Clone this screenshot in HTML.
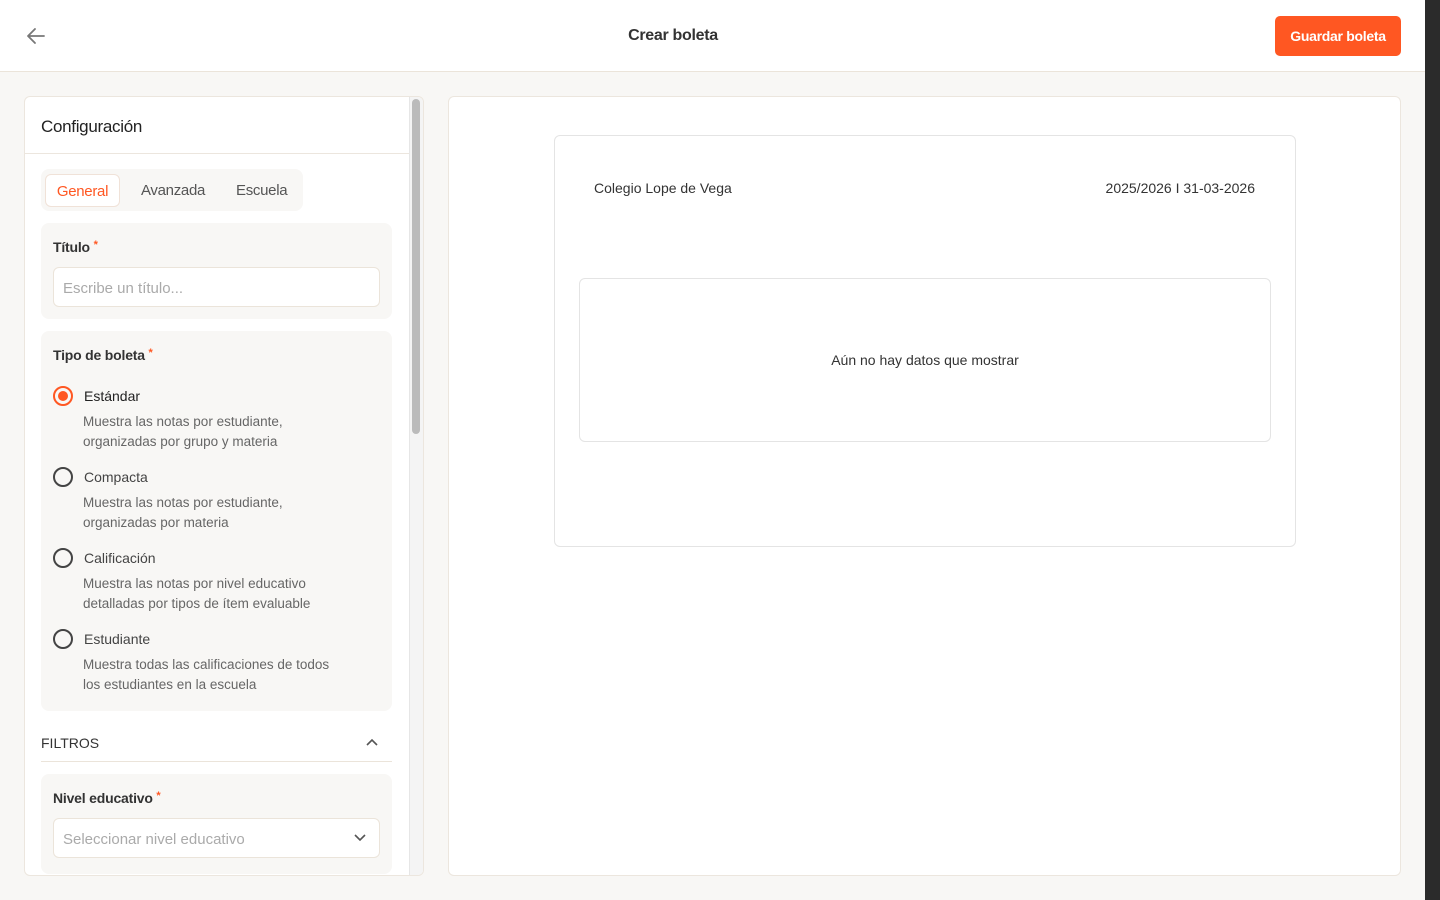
<!DOCTYPE html><html><head><meta charset="utf-8"><style>
*{box-sizing:border-box;margin:0;padding:0}
body{width:1440px;height:900px;overflow:hidden;background:#f8f7f5;font-family:"Liberation Sans",sans-serif;position:relative;color:#333}
.dark{position:absolute;left:1425px;top:0;width:15px;height:900px;background:#2b2b2b}
.top{position:absolute;left:0;top:0;width:1425px;height:72px;background:#fff;border-bottom:1px solid #ebe4da}
.title{position:absolute;left:0;width:1346px;top:27px;text-align:center;font-size:16px;color:#333;font-weight:bold;letter-spacing:-0.3px}
.btn{position:absolute;left:1275px;top:16px;width:126px;height:40px;background:#ff5722;border-radius:5px;color:#fff;font-weight:bold;font-size:14px;text-align:center;line-height:41px;letter-spacing:-0.3px}
.left{position:absolute;left:24px;top:96px;width:400px;height:780px;background:#fff;border:1px solid #ece6de;border-radius:6px;overflow:hidden}
.hd{height:57px;border-bottom:1px solid #ece6de;padding:20px 16px;font-size:17px;color:#222;width:384px;letter-spacing:-0.3px}
.sb{position:absolute;left:387px;top:2px;width:8px;height:335px;background:#bbb;border-radius:4px}
.sbt{position:absolute;left:384px;top:0;width:16px;height:780px;background:#f4f4f4;border-left:1px solid #e6e6e6}
.tabs{position:absolute;left:16px;top:72px;width:262px;height:42px;background:#f8f7f5;border-radius:8px;font-size:15px;color:#555;letter-spacing:-0.3px}
.tab{position:absolute;top:5px;height:33px;line-height:33px}
.card{position:absolute;left:16px;width:351px;background:#f8f7f5;border-radius:8px}
.lbl{font-size:14px;font-weight:bold;color:#333;position:absolute;left:12px;letter-spacing:-0.2px}
.req{color:#ff5722;font-size:11px;vertical-align:top}
.inp{position:absolute;left:12px;width:327px;height:40px;background:#fff;border:1px solid #ebe4da;border-radius:6px;color:#aaa;font-size:15px;padding:0 9px;line-height:41px}
.r{position:absolute;left:12px;font-size:14px;color:#444}
.rc{position:absolute;left:0;top:-1px;width:20px;height:20px;border:2px solid #444;border-radius:50%}
.r .t{position:absolute;left:31px;top:1px;white-space:nowrap}
.r .d{position:absolute;left:30px;top:25px;white-space:nowrap;line-height:20px;color:#666;font-size:13.5px}
.right{position:absolute;left:448px;top:96px;width:953px;height:780px;background:#fff;border:1px solid #ece6de;border-radius:6px}
.doc{position:absolute;left:105px;top:38px;width:742px;height:412px;border:1px solid #e4e4e4;border-radius:6px}
.empty{position:absolute;left:24px;top:142px;width:692px;height:164px;border:1px solid #e4e4e4;border-radius:6px;text-align:center;line-height:162px;font-size:14px;color:#333}
</style></head><body>
<div class="top">
<svg style="position:absolute;left:26px;top:27px" width="20" height="18" viewBox="0 0 20 18"><path d="M18 9H2M9 2L2 9l7 7" fill="none" stroke="#777" stroke-width="1.8" stroke-linecap="round" stroke-linejoin="round"/></svg>
<div class="title">Crear boleta</div>
<div class="btn">Guardar boleta</div>
</div>
<div class="dark"></div>
<div class="left">
<div class="hd">Configuración</div>
<div class="sbt"></div><div class="sb"></div>
<div class="tabs">
<div class="tab" style="left:4px;width:75px;background:#fff;border:1px solid #f0e2d8;border-radius:6px;color:#ff5722;text-align:center">General</div>
<div class="tab" style="left:100px">Avanzada</div>
<div class="tab" style="left:195px">Escuela</div>
</div>
<div class="card" style="top:126px;height:96px">
<div class="lbl" style="top:16px">Título <span class="req">*</span></div>
<div class="inp" style="top:44px">Escribe un título...</div>
</div>
<div class="card" style="top:234px;height:380px">
<div class="lbl" style="top:16px">Tipo de boleta <span class="req">*</span></div>
<div class="r" style="top:56px"><div class="rc" style="border-color:#ff5722"><div style="position:absolute;left:3px;top:3px;width:10px;height:10px;border-radius:50%;background:#ff5722"></div></div><div class="t" style="color:#222">Estándar</div><div class="d">Muestra las notas por estudiante,<br>organizadas por grupo y materia</div></div>
<div class="r" style="top:137px"><div class="rc"></div><div class="t">Compacta</div><div class="d">Muestra las notas por estudiante,<br>organizadas por materia</div></div>
<div class="r" style="top:218px"><div class="rc"></div><div class="t">Calificación</div><div class="d">Muestra las notas por nivel educativo<br>detalladas por tipos de ítem evaluable</div></div>
<div class="r" style="top:299px"><div class="rc"></div><div class="t">Estudiante</div><div class="d">Muestra todas las calificaciones de todos<br>los estudiantes en la escuela</div></div>
</div>
<div style="position:absolute;left:16px;top:638px;font-size:14px;color:#333">FILTROS</div>
<svg style="position:absolute;left:340px;top:640px" width="14" height="10" viewBox="0 0 14 10"><path d="M2 8l5-5 5 5" fill="none" stroke="#555" stroke-width="1.6"/></svg>
<div style="position:absolute;left:16px;top:664px;width:351px;height:1px;background:#ebe4da"></div>
<div class="card" style="top:677px;height:100px">
<div class="lbl" style="top:16px">Nivel educativo <span class="req">*</span></div>
<div class="inp" style="top:44px">Seleccionar nivel educativo
<svg style="position:absolute;right:12px;top:14px" width="14" height="10" viewBox="0 0 14 10"><path d="M2 2l5 5 5-5" fill="none" stroke="#555" stroke-width="1.6"/></svg></div>
</div>
</div>
<div class="right"><div class="doc">
<div style="position:absolute;left:39px;top:44px;font-size:14px">Colegio Lope de Vega</div>
<div style="position:absolute;right:40px;top:44px;font-size:14px">2025/2026 I 31-03-2026</div>
<div class="empty">Aún no hay datos que mostrar</div>
</div></div>
</body></html>
